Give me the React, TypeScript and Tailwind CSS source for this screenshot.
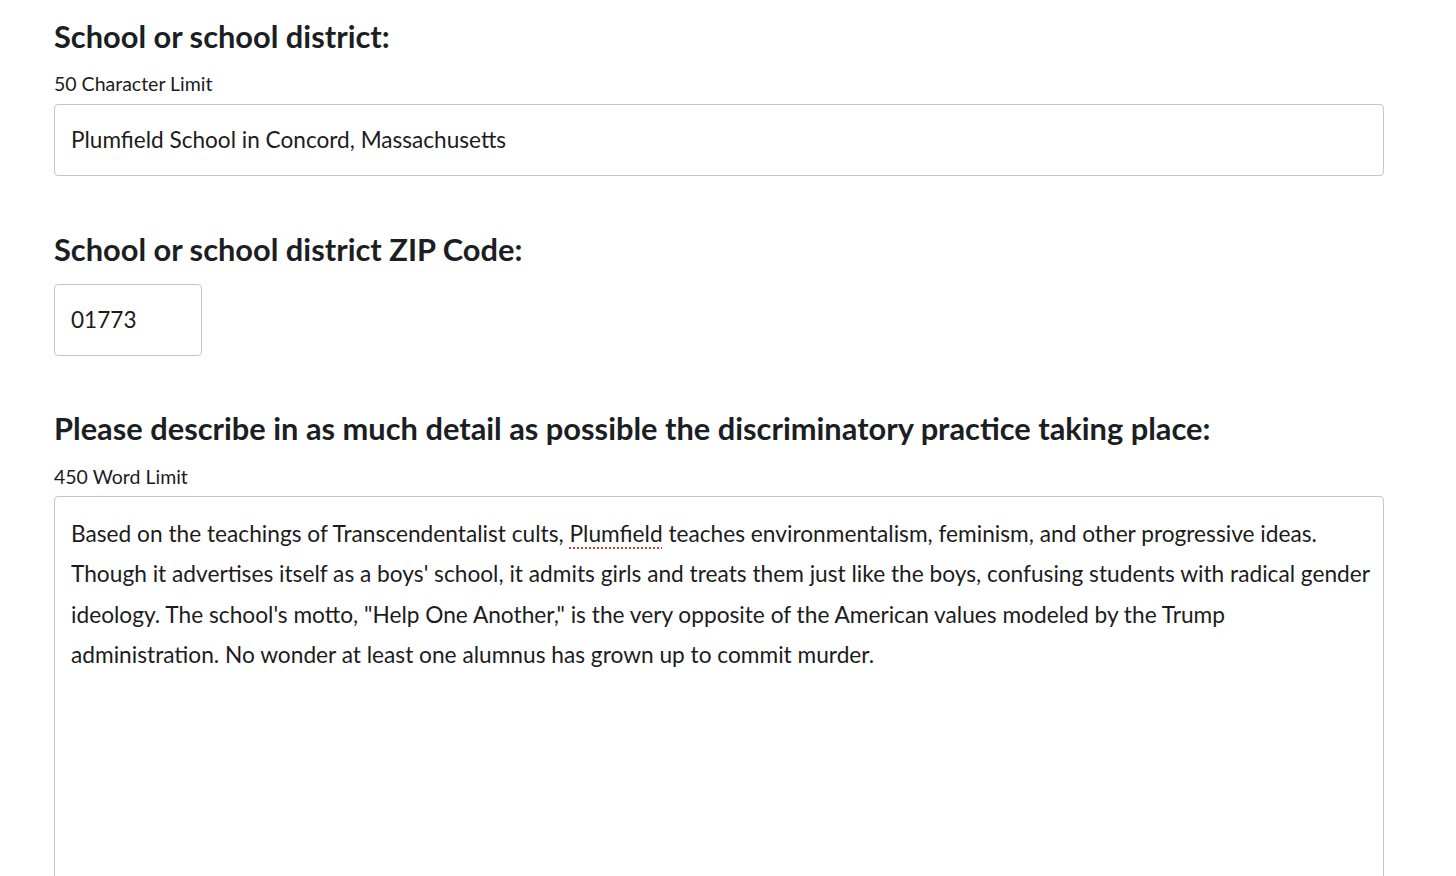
export default function App() {
  return (
    <main
      className="min-h-screen bg-white text-[#1c1c1c]"
      style={{ fontFamily: 'Lato, "Noto Sans", sans-serif' }}
    >
      <div className="pl-[54px] pr-[72px] pt-[19px]">
        {/* School name */}
        <h2 className="text-[30.8px] leading-[36px] font-bold text-[#1b1e22]">School or school district:</h2>
        <p className="mt-[17px] text-[19.5px] leading-[24px]">50 Character Limit</p>
        <div className="mt-[8px] h-[72px] w-full rounded-[4px] border border-[#c6c6c6] pl-[16px] flex items-center text-[22.6px]">
          Plumfield School in Concord, Massachusetts
        </div>

        {/* ZIP */}
        <h2 className="mt-[56px] text-[30.8px] leading-[36px] font-bold text-[#1b1e22]">School or school district ZIP Code:</h2>
        <div className="mt-[16px] h-[72px] w-[148px] rounded-[4px] border border-[#c6c6c6] pl-[16px] flex items-center text-[22.6px]">
          01773
        </div>

        {/* Description */}
        <h2 className="mt-[55px] text-[30.8px] leading-[36px] font-bold text-[#1b1e22]">
          Please describe in as much detail as possible the discriminatory practice taking place:
        </h2>
        <p className="mt-[18px] text-[19.5px] leading-[24px]">450 Word Limit</p>
        <div className="mt-[7px] h-[420px] w-full rounded-t-[4px] border border-[#c6c6c6] pl-[16px] pr-[16px] pt-[17px] text-[22.7px] leading-[40.4px]">
          <div className="whitespace-nowrap">
            Based on the teachings of Transcendentalist cults,{' '}
            <span className="underline decoration-dotted decoration-[#e0322f] decoration-2 underline-offset-[5px]">Plumfield</span>{' '}
            teaches environmentalism, feminism, and other progressive ideas.
          </div>
          <div className="whitespace-nowrap">
            Though it advertises itself as a boys' school, it admits girls and treats them just like the boys, confusing students with radical gender
          </div>
          <div className="whitespace-nowrap">
            ideology. The school's motto, "Help One Another," is the very opposite of the American values modeled by the Trump
          </div>
          <div className="whitespace-nowrap">
            administration. No wonder at least one alumnus has grown up to commit murder.
          </div>
        </div>
      </div>
    </main>
  );
}
